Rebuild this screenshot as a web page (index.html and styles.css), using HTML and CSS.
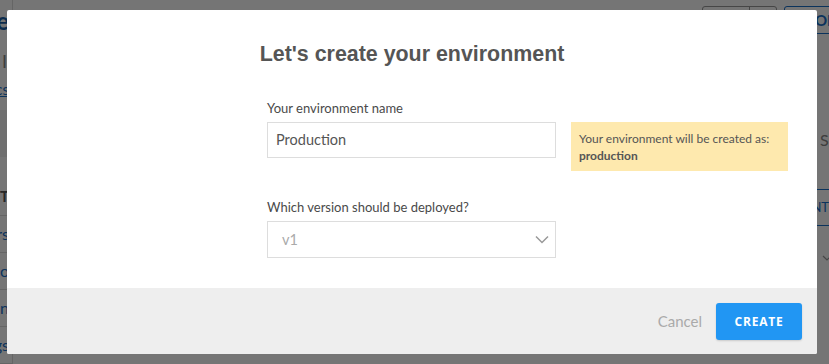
FILE: index.html
```html
<!doctype html>
<html>
<head>
	<title>Create environment</title>
	<meta charset="utf-8" />
	<meta name="viewport" content="width=device-width, initial-scale=1" />
	<link rel="stylesheet" href="styles.css">
</head>
<body>
	<div id="page">
		<div class="sidecol">
			<div class="line title">Home</div>
			<div class="line subtle">I</div>
			<div class="line link">Docs</div>
			<div class="sidebox"></div>
			<div class="line head">TT</div>
			<div class="row">Users</div>
			<div class="row">Go</div>
			<div class="row">Domain</div>
			<div class="row">Settings</div>
		</div>
		<div class="spacer"></div>
		<div class="rightcol">
			<div class="toolbar">
				<div class="btngroup"><span class="gbtn wide"></span><span class="gbtn"></span></div>
				<span class="bluebtn">OPEN</span>
			</div>
			<div class="edge">
				<div class="search">Search</div>
				<div class="tab"><span>ENVIRONMENT</span></div>
				<div class="chev">
					<svg width="10" height="6" viewBox="0 0 10 6"><path d="M1 1 L5 5 L9 1" fill="none" stroke="#999" stroke-width="1.2"/></svg>
				</div>
			</div>
		</div>
	</div>

	<div id="overlay"></div>

	<div id="modal">
		<div class="content">
			<h1>Let's create your environment</h1>

			<div class="formrow">
				<div class="field">
					<label>Your environment name</label>
					<div class="input">Production</div>
				</div>
				<div class="note">
					Your environment will be created as:<br>
					<b>production</b>
				</div>
			</div>

			<div class="formrow">
				<div class="field">
					<label>Which version should be deployed?</label>
					<div class="input select">
						<span>v1</span>
						<svg width="14" height="9" viewBox="0 0 14 9"><path d="M1 1.5 L7 7.5 L13 1.5" fill="none" stroke="#999" stroke-width="1.5"/></svg>
					</div>
				</div>
			</div>
		</div>

		<div class="footer">
			<span class="cancel">Cancel</span>
			<button type="button" class="create">CREATE</button>
		</div>
	</div>
</body>
</html>
```

FILE: styles.css
```css
body {
	margin:0;
	padding:0;
	font-family:Lato, "Open Sans", sans-serif;
	background-color:white;
	width:829px;
	height:364px;
	overflow:hidden;
	position:relative;
}

/* page behind the dialog */

#page {
	display:flex;
	height:364px;
	color:#333;
}

.sidecol {
	width:12px;
	border-right:1px solid #ddd;
}

.line, .row {
	display:flex;
	justify-content:flex-end;
	white-space:nowrap;
	overflow:hidden;
	padding-right:3px;
}

.title {
	margin-top:8px;
	font-size:24px;
	font-weight:bold;
	color:#1a5fa8;
	line-height:26px;
}

.subtle {
	margin-top:16px;
	font-size:18px;
	color:#888;
	line-height:22px;
	padding-right:5px;
}

.link {
	margin-top:8px;
	font-size:15px;
	color:#1a6fc8;
	text-decoration:underline;
	line-height:18px;
}

.sidebox {
	height:47px;
	margin-top:12px;
	background-color:#f2f2f2;
}

.head {
	margin-top:27px;
	font-size:15px;
	font-weight:bold;
	color:#555;
	line-height:24px;
	height:24px;
	border-bottom:1px solid #ddd;
	padding-bottom:7px;
}

.row {
	height:36px;
	border-bottom:1px solid #ddd;
	font-size:16px;
	line-height:36px;
	color:#1a6fc8;
}

.spacer {
	flex:1;
}

.rightcol {
	width:127px;
}

.toolbar {
	display:flex;
	gap:7px;
	margin-top:6px;
}

.btngroup {
	display:flex;
	border:1px solid #999;
	border-radius:3px;
	height:26px;
}

.gbtn {
	width:26px;
}

.gbtn.wide {
	width:46px;
	border-right:1px solid #999;
}

.bluebtn {
	display:block;
	width:60px;
	height:26px;
	border:1px solid #1a6fc8;
	border-radius:3px;
	padding-left:30px;
	color:#1a6fc8;
	font-weight:bold;
	font-size:15px;
	line-height:26px;
	white-space:nowrap;
}

.edge {
	padding-left:114px;
	overflow:hidden;
}

.search {
	margin-top:96px;
	font-size:16px;
	color:#888;
	padding-left:4px;
}

.tab {
	display:flex;
	justify-content:flex-end;
	margin-top:40px;
	height:35px;
	border-top:1px solid #1a6fc8;
	border-bottom:1px solid #1a6fc8;
	line-height:35px;
	font-size:13px;
	color:#1a6fc8;
	white-space:nowrap;
	overflow:hidden;
}

.chev {
	margin-top:19px;
	padding-left:6px;
}

#overlay {
	position:absolute;
	top:0;
	left:0;
	width:829px;
	height:364px;
	background-color:rgba(0,0,0,0.54);
}

/* dialog */

#modal {
	position:absolute;
	top:10px;
	left:7px;
	width:810px;
	height:344px;
	background-color:white;
	border-radius:2px;
	display:flex;
	flex-direction:column;
	overflow:hidden;
}

.content {
	flex:1;
	padding:31px 0 0 260px;
}

h1 {
	margin:0 0 0 -10px;
	width:310px;
	text-align:center;
	font-family:"Liberation Sans", Arial, sans-serif;
	font-size:21.4px;
	font-weight:bold;
	color:#555;
	line-height:26px;
}

.formrow {
	display:flex;
	gap:15px;
	margin-top:33px;
	align-items:flex-start;
}

.formrow + .formrow {
	margin-top:28px;
}

.field {
	width:289px;
}

label {
	display:block;
	font-size:13px;
	color:#4a4a4a;
	margin-bottom:6px;
	line-height:16px;
}

.input {
	box-sizing:border-box;
	height:36px;
	border:1px solid #ddd;
	padding:0 8px;
	font-size:14.5px;
	line-height:34px;
	color:#555;
}

.select {
	display:flex;
	justify-content:space-between;
	align-items:center;
	height:37px;
	padding:0 6px 0 14px;
	color:#aaa;
}

.note {
	box-sizing:border-box;
	width:217px;
	margin-top:22px;
	padding:8px 8px 7px 8px;
	background-color:#fee9ae;
	font-size:12px;
	line-height:17px;
	color:#555;
}

.footer {
	height:66px;
	background-color:#eee;
	display:flex;
	justify-content:flex-end;
	align-items:center;
	gap:14px;
	padding-right:15px;
}

.cancel {
	font-size:15px;
	color:#aaa;
}

.create {
	width:86px;
	height:37px;
	border:none;
	border-radius:3px;
	background-color:#2196f3;
	color:white;
	font-family:"Open Sans", sans-serif;
	font-size:12px;
	font-weight:bold;
	letter-spacing:0.8px;
	box-shadow:0 1px 2px rgba(0,0,0,0.15);
}
```
